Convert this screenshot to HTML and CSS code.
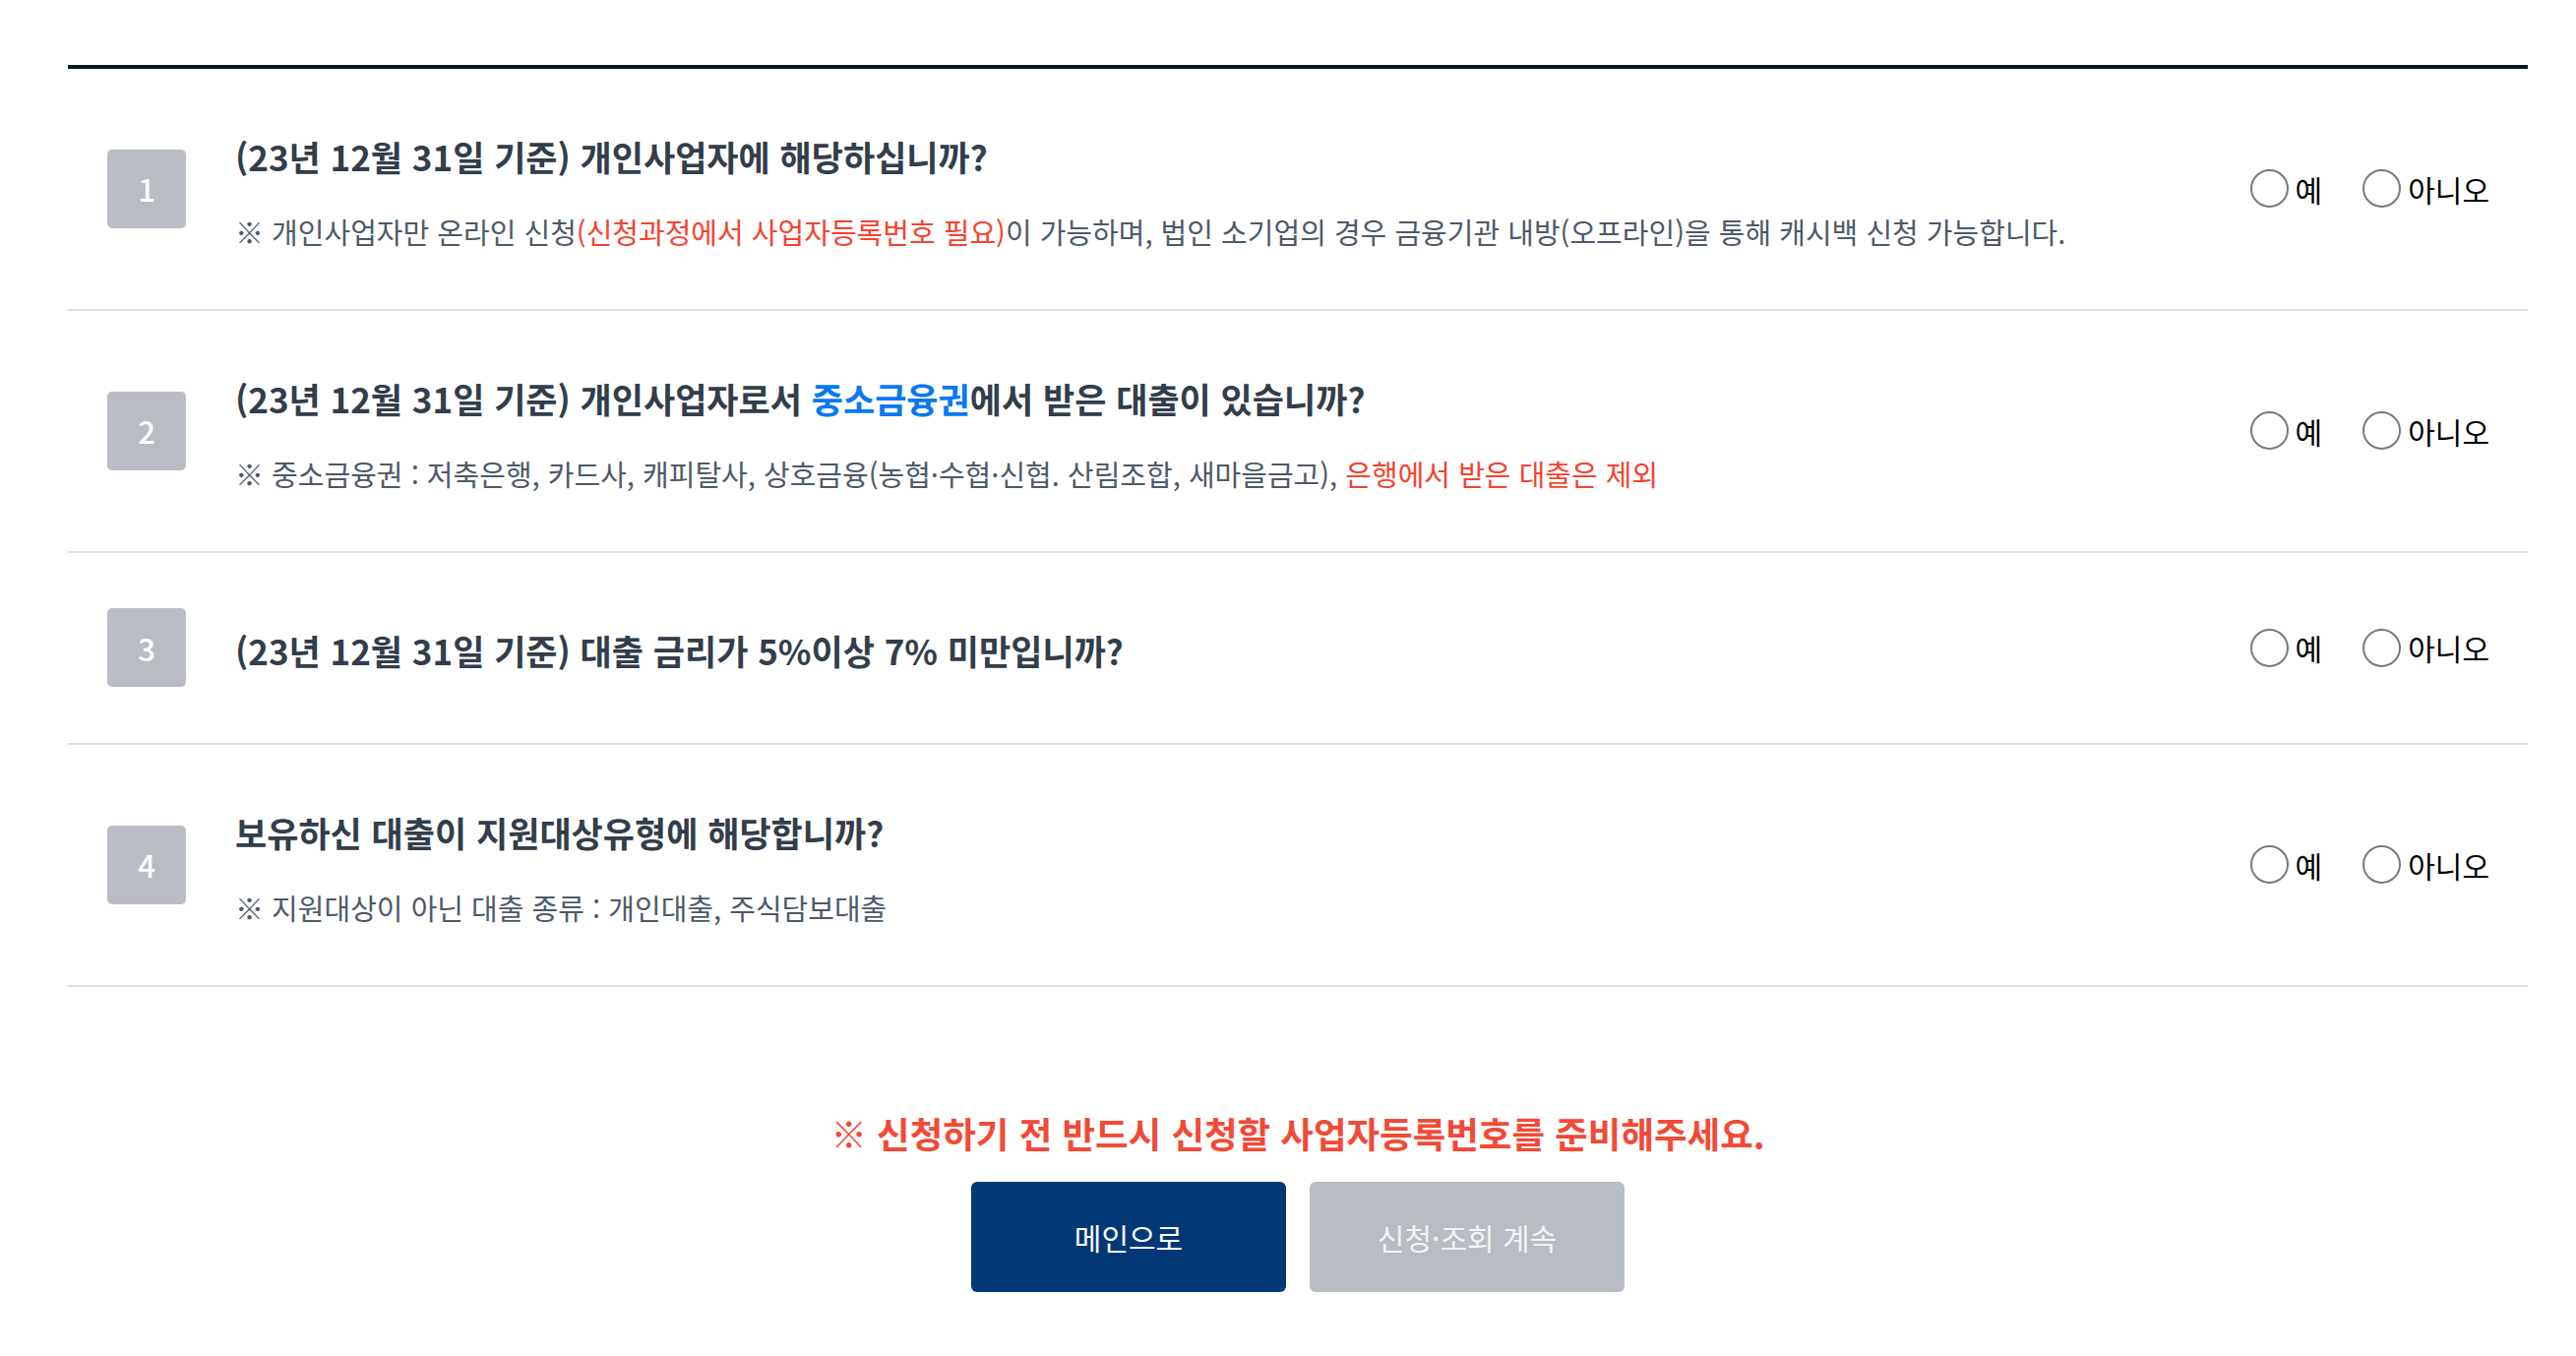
FILE: index.html
```html
<!DOCTYPE html>
<html lang="ko">
<head>
<meta charset="utf-8">
<title>지원대상 확인</title>
<link rel="stylesheet" href="styles.css">
</head>
<body>
<div class="page">
  <div class="q-list">
    <div class="q-row">
      <span class="q-num">1</span>
      <div class="q-text">
        <p class="q-title">(23년 12월 31일 기준) 개인사업자에 해당하십니까?</p>
        <p class="q-note">※ 개인사업자만 온라인 신청<span class="red">(신청과정에서 사업자등록번호 필요)</span>이 가능하며, 법인 소기업의 경우 금융기관 내방(오프라인)을 통해 캐시백 신청 가능합니다.</p>
      </div>
      <div class="q-options">
        <label class="opt"><input type="radio" name="q1"><span>예</span></label>
        <label class="opt"><input type="radio" name="q1"><span>아니오</span></label>
      </div>
    </div>
    <div class="q-row">
      <span class="q-num">2</span>
      <div class="q-text">
        <p class="q-title">(23년 12월 31일 기준) 개인사업자로서 <span class="blue">중소금융권</span>에서 받은 대출이 있습니까?</p>
        <p class="q-note">※ 중소금융권 : 저축은행, 카드사, 캐피탈사, 상호금융(농협·수협·신협. 산림조합, 새마을금고), <span class="red">은행에서 받은 대출은 제외</span></p>
      </div>
      <div class="q-options">
        <label class="opt"><input type="radio" name="q2"><span>예</span></label>
        <label class="opt"><input type="radio" name="q2"><span>아니오</span></label>
      </div>
    </div>
    <div class="q-row">
      <span class="q-num">3</span>
      <div class="q-text">
        <p class="q-title">(23년 12월 31일 기준) 대출 금리가 5%이상 7% 미만입니까?</p>
      </div>
      <div class="q-options">
        <label class="opt"><input type="radio" name="q3"><span>예</span></label>
        <label class="opt"><input type="radio" name="q3"><span>아니오</span></label>
      </div>
    </div>
    <div class="q-row">
      <span class="q-num">4</span>
      <div class="q-text">
        <p class="q-title">보유하신 대출이 지원대상유형에 해당합니까?</p>
        <p class="q-note">※ 지원대상이 아닌 대출 종류 : 개인대출, 주식담보대출</p>
      </div>
      <div class="q-options">
        <label class="opt"><input type="radio" name="q4"><span>예</span></label>
        <label class="opt"><input type="radio" name="q4"><span>아니오</span></label>
      </div>
    </div>
  </div>
  <p class="notice">※ 신청하기 전 반드시 신청할 사업자등록번호를 준비해주세요.</p>
  <div class="btns">
    <button class="btn btn-main" type="button">메인으로</button>
    <button class="btn btn-next" type="button">신청·조회 계속</button>
  </div>
</div>
</body>
</html>
```
FILE: styles.css
```css
* { box-sizing: border-box; }
html, body { margin: 0; padding: 0; background: #fff; }
body {
  font-family: "Noto Sans CJK KR", "Noto Sans", sans-serif;
  color: #333d4b;
}
.page {
  width: 2500px;
  margin: 66px 0 0 69px;
}
.q-list {
  border-top: 4px solid #0b1729;
}
.q-row {
  display: flex;
  align-items: center;
  padding: 56px 39px 57px 40px;
  border-bottom: 2px solid #dcdde1;
}
.q-num {
  flex: none;
  width: 80px;
  height: 80px;
  border-radius: 5px;
  background: #b9bdc3;
  color: #fff;
  font-size: 31px;
  font-weight: 500;
  display: flex;
  align-items: center;
  justify-content: center;
  margin-right: 50px;
}
.q-text {
  flex: 1;
  padding-top: 6px;
}
.q-title {
  margin: 0;
  font-size: 35px;
  line-height: 54px;
  font-weight: 700;
  color: #333d4b;
}
.q-note {
  margin: 27px 0 0;
  font-size: 29px;
  line-height: 44px;
  color: #4e5968;
}
.red { color: #f4432f; }
.blue { color: #0a78f0; }
.q-options {
  flex: none;
  display: flex;
  align-items: center;
  gap: 41px;
}
.opt {
  display: flex;
  align-items: center;
  gap: 7px;
  font-size: 30px;
  color: #000;
  cursor: pointer;
}
.opt input {
  appearance: none;
  -webkit-appearance: none;
  margin: 0;
  width: 39px;
  height: 39px;
  border: 2px solid #7a7a7a;
  border-radius: 50%;
  background: #fff;
}
.notice {
  margin: 124px 0 0;
  text-align: center;
  font-size: 36.5px;
  line-height: 50px;
  font-weight: 700;
  color: #f24a36;
}
.btns {
  display: flex;
  justify-content: center;
  gap: 24px;
  margin-top: 24px;
}
.btn {
  width: 320px;
  height: 112px;
  border: 0;
  border-radius: 6px;
  font-family: "Noto Sans CJK KR", "Noto Sans", sans-serif;
  font-size: 30px;
  color: #fff;
  cursor: pointer;
}
.btn-main { background: #033876; }
.btn-next { background: #b8bcc3; color: #f2f3f5; }
```
